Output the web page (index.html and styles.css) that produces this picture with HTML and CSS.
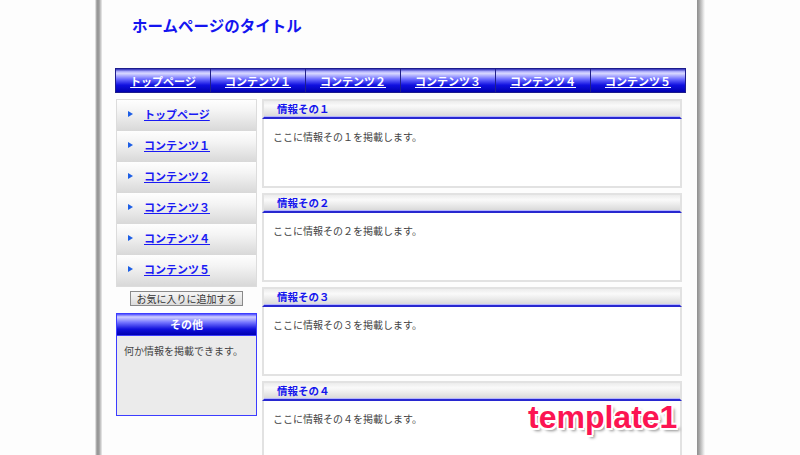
FILE: index.html
```html
<!DOCTYPE html>
<html lang="ja">
<head>
<meta charset="utf-8">
<title>ホームページのタイトル</title>
<link rel="stylesheet" href="styles.css">
</head>
<body>
<div class="frame">
  <div class="page">
    <header class="site-header">
      <h1 class="site-title">ホームページのタイトル</h1>
    </header>
    <nav class="gnav">
      <a class="gnav-item" href="#">トップページ</a>
      <a class="gnav-item" href="#">コンテンツ１</a>
      <a class="gnav-item" href="#">コンテンツ２</a>
      <a class="gnav-item" href="#">コンテンツ３</a>
      <a class="gnav-item" href="#">コンテンツ４</a>
      <a class="gnav-item" href="#">コンテンツ５</a>
    </nav>
    <div class="columns">
      <aside class="sidebar">
        <ul class="side-menu">
          <li class="side-item"><span class="bullet"></span><a href="#">トップページ</a></li>
          <li class="side-item"><span class="bullet"></span><a href="#">コンテンツ１</a></li>
          <li class="side-item"><span class="bullet"></span><a href="#">コンテンツ２</a></li>
          <li class="side-item"><span class="bullet"></span><a href="#">コンテンツ３</a></li>
          <li class="side-item"><span class="bullet"></span><a href="#">コンテンツ４</a></li>
          <li class="side-item"><span class="bullet"></span><a href="#">コンテンツ５</a></li>
        </ul>
        <div class="fav-wrap"><button class="fav-btn" type="button">お気に入りに追加する</button></div>
        <div class="other-box">
          <div class="other-head">その他</div>
          <div class="other-body">何か情報を掲載できます。</div>
        </div>
      </aside>
      <main class="main">
        <section class="info">
          <h2 class="info-head">情報その１</h2>
          <div class="info-body">ここに情報その１を掲載します。</div>
        </section>
        <section class="info">
          <h2 class="info-head">情報その２</h2>
          <div class="info-body">ここに情報その２を掲載します。</div>
        </section>
        <section class="info">
          <h2 class="info-head">情報その３</h2>
          <div class="info-body">ここに情報その３を掲載します。</div>
        </section>
        <section class="info">
          <h2 class="info-head">情報その４</h2>
          <div class="info-body">ここに情報その４を掲載します。</div>
        </section>
      </main>
    </div>
  </div>
</div>
<div class="watermark">template1</div>
</body>
</html>
```
FILE: styles.css
```css
* { box-sizing: border-box; }
html, body { margin: 0; padding: 0; background: #fdfdfd; }
body {
  font-family: "Noto Sans CJK JP", "Noto Sans", sans-serif;
  height: 455px;
  overflow: hidden;
  position: relative;
}
.frame {
  width: 610px;
  margin: 0 auto;
  padding: 0 8px 0 7px;
  min-height: 455px;
  background: linear-gradient(to right,
    #f6f6f6 0px, #c4c4c4 1px, #959595 2px, #9c9c9c 4px, #d4d4d4 6px, #ececec 7px,
    #fdfdfd 7px, #fdfdfd 602px,
    #8e8e8e 602px, #a2a2a2 604px, #cfcfcf 607px, #eeeeee 609px, #fafafa 610px);
}
.page {
  background: #fdfdfd;
  min-height: 455px;
}
.site-header {
  height: 68px;
  padding: 14px 0 0 30px;
}
.site-title {
  margin: 0;
  font-size: 15.5px;
  line-height: 22px;
  font-weight: bold;
  color: #1414f0;
}
.gnav {
  display: flex;
  height: 25px;
  margin: 0 11px 0 13px;
  border: 1px solid #1c1c8c;
  background: linear-gradient(to bottom, #2a2ab8 0%, #b8b8ff 12%, #d6d6ff 20%, #6a6aff 45%, #1010e0 70%, #0000b0 100%);
}
.gnav-item {
  flex: 1;
  display: flex;
  align-items: center;
  justify-content: center;
  color: #ffffff;
  font-size: 11px;
  font-weight: bold;
  text-decoration: underline;
  border-left: 1px solid #20208a;
}
.gnav-item:first-child { border-left: none; }
.columns {
  display: flex;
  align-items: flex-start;
  margin-top: 6px;
  padding-left: 14px;
}
.sidebar {
  width: 141px;
  flex: none;
}
.side-menu {
  list-style: none;
  margin: 0;
  padding: 0;
  border: 1px solid #dcdcdc;
  box-shadow: inset 0 0 0 1px #ececec;
}
.side-item {
  display: flex;
  align-items: center;
  height: 31px;
  padding: 0 0 3px 11px;
  background: linear-gradient(to bottom, #fefefe 0%, #f4f4f4 35%, #d8d8d8 100%);
}
.bullet {
  width: 0;
  height: 0;
  border-left: 5px solid #1c5ee6;
  border-top: 3.5px solid transparent;
  border-bottom: 3.5px solid transparent;
  margin-right: 11px;
}
.side-item a {
  color: #1a1af4;
  font-size: 11px;
  font-weight: bold;
  text-decoration: underline;
}
.fav-wrap {
  display: flex;
  justify-content: center;
  margin-top: 4px;
}
.fav-btn {
  width: 113px;
  height: 15px;
  padding: 0;
  border: 1px solid #8a8a8a;
  background: linear-gradient(to bottom, #f6f6f6, #dcdcdc);
  font-family: "Noto Sans CJK JP", sans-serif;
  font-size: 10px;
  line-height: 13px;
  color: #333;
}
.other-box {
  margin-top: 7px;
  border: 1px solid #3c3cff;
}
.other-head {
  height: 22px;
  line-height: 21px;
  text-align: center;
  color: #fff;
  font-size: 11px;
  font-weight: bold;
  background: linear-gradient(to bottom, #4a4aff 0%, #d0d0ff 14%, #7474ff 40%, #1010dc 72%, #0000b0 100%);
  border-bottom: 1px solid #3c3cff;
}
.other-body {
  height: 79px;
  padding: 8px 7px;
  background: #ebebeb;
  color: #444;
  font-size: 10px;
  line-height: 14px;
}
.main {
  width: 420px;
  margin-left: 5px;
  flex: none;
}
.info { margin-bottom: 5px; }
.info-head {
  margin: 0;
  height: 20px;
  padding-left: 13px;
  border: 2px solid #e2e2e2;
  border-bottom: 2px solid #2828d0;
  box-shadow: inset 0 -1px 0 #b4b4ff;
  background: linear-gradient(to bottom, #ececec 0%, #fafafa 30%, #e6e6e6 70%, #d6d6d6 100%);
  color: #1414ee;
  font-size: 10.5px;
  font-weight: bold;
  line-height: 16px;
}
.info-body {
  height: 69px;
  padding: 10px 0 0 9px;
  border: 2px solid #e2e2e2;
  border-top: none;
  background: #fff;
  color: #444;
  font-size: 10px;
  line-height: 16px;
}
.watermark {
  position: absolute;
  left: 528px;
  top: 399px;
  font-family: "Liberation Sans", Arial, sans-serif;
  font-size: 32px;
  font-weight: bold;
  line-height: 36px;
  color: #fc1452;
  text-shadow:
    -2px 0 0 #fff, 2px 0 0 #fff, 0 -2px 0 #fff, 0 2px 0 #fff,
    -1.5px -1.5px 0 #fff, 1.5px -1.5px 0 #fff, -1.5px 1.5px 0 #fff, 1.5px 1.5px 0 #fff,
    3px 3px 3px rgba(0,0,0,0.45);
}
```
